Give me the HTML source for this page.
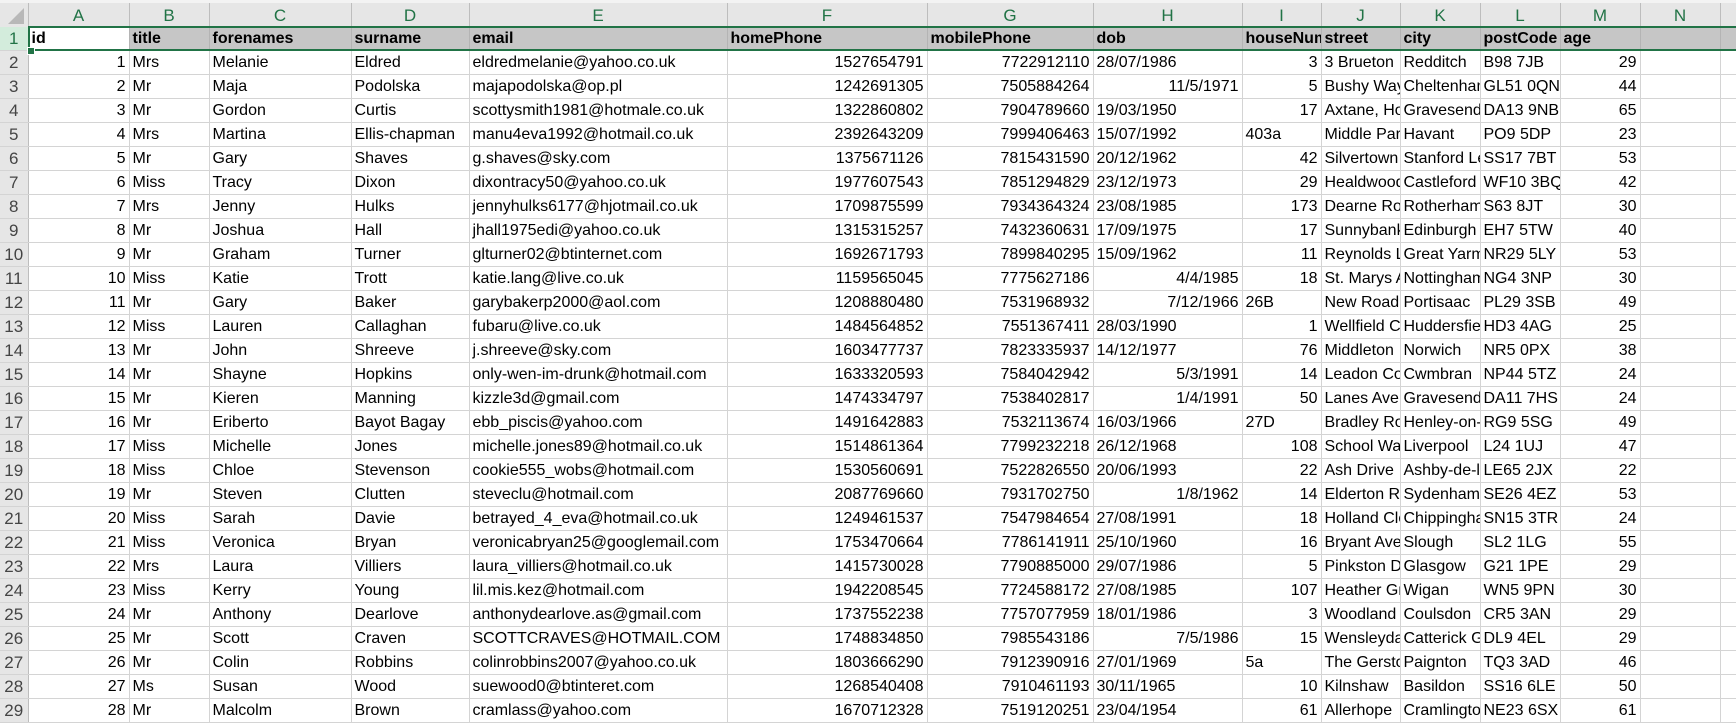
<!DOCTYPE html>
<html><head><meta charset="utf-8"><style>
html,body{margin:0;padding:0;background:#fff;width:1736px;height:721px;overflow:hidden}
body{font-family:"Liberation Sans",sans-serif;font-size:16px;color:#000}
.top{position:absolute;left:0;top:0;width:1736px;height:3px;background:#f3f3f3}
table{position:absolute;left:0;top:3px;border-collapse:collapse;table-layout:fixed;width:1736px}
td{border-right:1px solid #d4d4d4;border-bottom:1px solid #d4d4d4;height:23px;padding:0 3px;white-space:nowrap;overflow:hidden;line-height:23px;box-sizing:border-box}
tr.ch td{background:#e6e6e6;color:#217346;text-align:center;height:24px;font-size:17px;border-right:1px solid #bdbdbd;border-bottom:none}
td.rn{background:#e6e6e6;color:#444;text-align:center;padding:0;border-right:1px solid #bdbdbd;font-size:17px}
tr.h td{background:#c6c6c6;font-weight:bold;border-right:1px solid #b4b4b4}
tr.h td.rn{background:#d3ecdc;color:#217346;font-weight:normal}
tr.h td.a1{background:#fff}
.r{text-align:right}
.sel{position:absolute;left:28px;top:26px;width:1708px;height:25px;border-top:2px solid #217346;border-bottom:2px solid #217346;border-left:2px solid #217346;box-sizing:border-box;pointer-events:none}
.hdl{position:absolute;left:27px;top:47px;width:6px;height:6px;background:#217346;border:1px solid #fff}
.tri{position:absolute;left:8px;top:8px;width:0;height:0;border-left:16px solid transparent;border-bottom:16px solid #b8b8b8}
</style></head><body>
<div class="top"></div>
<table>
<colgroup><col style="width:28px"><col style="width:101px"><col style="width:80px"><col style="width:142px"><col style="width:118px"><col style="width:258px"><col style="width:200px"><col style="width:166px"><col style="width:149px"><col style="width:79px"><col style="width:79px"><col style="width:80px"><col style="width:80px"><col style="width:80px"><col style="width:80px"><col style="width:16px"></colgroup>
<tr class="ch"><td></td><td>A</td><td>B</td><td>C</td><td>D</td><td>E</td><td>F</td><td>G</td><td>H</td><td>I</td><td>J</td><td>K</td><td>L</td><td>M</td><td>N</td><td></td></tr>
<tr class="h"><td class="rn">1</td><td class="a1">id</td><td>title</td><td>forenames</td><td>surname</td><td>email</td><td>homePhone</td><td>mobilePhone</td><td>dob</td><td>houseNumber</td><td>street</td><td>city</td><td>postCode</td><td>age</td><td></td><td></td></tr>
<tr><td class="rn">2</td><td class="r">1</td><td>Mrs</td><td>Melanie</td><td>Eldred</td><td>eldredmelanie@yahoo.co.uk</td><td class="r">1527654791</td><td class="r">7722912110</td><td>28/07/1986</td><td class="r">3</td><td>3 Brueton</td><td>Redditch</td><td>B98 7JB</td><td class="r">29</td><td></td><td></td></tr>
<tr><td class="rn">3</td><td class="r">2</td><td>Mr</td><td>Maja</td><td>Podolska</td><td>majapodolska@op.pl</td><td class="r">1242691305</td><td class="r">7505884264</td><td class="r">11/5/1971</td><td class="r">5</td><td>Bushy Way</td><td>Cheltenham</td><td>GL51 0QN</td><td class="r">44</td><td></td><td></td></tr>
<tr><td class="rn">4</td><td class="r">3</td><td>Mr</td><td>Gordon</td><td>Curtis</td><td>scottysmith1981@hotmale.co.uk</td><td class="r">1322860802</td><td class="r">7904789660</td><td>19/03/1950</td><td class="r">17</td><td>Axtane, Horton</td><td>Gravesend</td><td>DA13 9NB</td><td class="r">65</td><td></td><td></td></tr>
<tr><td class="rn">5</td><td class="r">4</td><td>Mrs</td><td>Martina</td><td>Ellis-chapman</td><td>manu4eva1992@hotmail.co.uk</td><td class="r">2392643209</td><td class="r">7999406463</td><td>15/07/1992</td><td>403a</td><td>Middle Park</td><td>Havant</td><td>PO9 5DP</td><td class="r">23</td><td></td><td></td></tr>
<tr><td class="rn">6</td><td class="r">5</td><td>Mr</td><td>Gary</td><td>Shaves</td><td>g.shaves@sky.com</td><td class="r">1375671126</td><td class="r">7815431590</td><td>20/12/1962</td><td class="r">42</td><td>Silvertown</td><td>Stanford Le</td><td>SS17 7BT</td><td class="r">53</td><td></td><td></td></tr>
<tr><td class="rn">7</td><td class="r">6</td><td>Miss</td><td>Tracy</td><td>Dixon</td><td>dixontracy50@yahoo.co.uk</td><td class="r">1977607543</td><td class="r">7851294829</td><td>23/12/1973</td><td class="r">29</td><td>Healdwood</td><td>Castleford</td><td>WF10 3BQ</td><td class="r">42</td><td></td><td></td></tr>
<tr><td class="rn">8</td><td class="r">7</td><td>Mrs</td><td>Jenny</td><td>Hulks</td><td>jennyhulks6177@hjotmail.co.uk</td><td class="r">1709875599</td><td class="r">7934364324</td><td>23/08/1985</td><td class="r">173</td><td>Dearne Road</td><td>Rotherham</td><td>S63 8JT</td><td class="r">30</td><td></td><td></td></tr>
<tr><td class="rn">9</td><td class="r">8</td><td>Mr</td><td>Joshua</td><td>Hall</td><td>jhall1975edi@yahoo.co.uk</td><td class="r">1315315257</td><td class="r">7432360631</td><td>17/09/1975</td><td class="r">17</td><td>Sunnybank</td><td>Edinburgh</td><td>EH7 5TW</td><td class="r">40</td><td></td><td></td></tr>
<tr><td class="rn">10</td><td class="r">9</td><td>Mr</td><td>Graham</td><td>Turner</td><td>glturner02@btinternet.com</td><td class="r">1692671793</td><td class="r">7899840295</td><td>15/09/1962</td><td class="r">11</td><td>Reynolds Lane</td><td>Great Yarmouth</td><td>NR29 5LY</td><td class="r">53</td><td></td><td></td></tr>
<tr><td class="rn">11</td><td class="r">10</td><td>Miss</td><td>Katie</td><td>Trott</td><td>katie.lang@live.co.uk</td><td class="r">1159565045</td><td class="r">7775627186</td><td class="r">4/4/1985</td><td class="r">18</td><td>St. Marys Ave</td><td>Nottingham</td><td>NG4 3NP</td><td class="r">30</td><td></td><td></td></tr>
<tr><td class="rn">12</td><td class="r">11</td><td>Mr</td><td>Gary</td><td>Baker</td><td>garybakerp2000@aol.com</td><td class="r">1208880480</td><td class="r">7531968932</td><td class="r">7/12/1966</td><td>26B</td><td>New Road</td><td>Portisaac</td><td>PL29 3SB</td><td class="r">49</td><td></td><td></td></tr>
<tr><td class="rn">13</td><td class="r">12</td><td>Miss</td><td>Lauren</td><td>Callaghan</td><td>fubaru@live.co.uk</td><td class="r">1484564852</td><td class="r">7551367411</td><td>28/03/1990</td><td class="r">1</td><td>Wellfield Close</td><td>Huddersfield</td><td>HD3 4AG</td><td class="r">25</td><td></td><td></td></tr>
<tr><td class="rn">14</td><td class="r">13</td><td>Mr</td><td>John</td><td>Shreeve</td><td>j.shreeve@sky.com</td><td class="r">1603477737</td><td class="r">7823335937</td><td>14/12/1977</td><td class="r">76</td><td>Middleton</td><td>Norwich</td><td>NR5 0PX</td><td class="r">38</td><td></td><td></td></tr>
<tr><td class="rn">15</td><td class="r">14</td><td>Mr</td><td>Shayne</td><td>Hopkins</td><td>only-wen-im-drunk@hotmail.com</td><td class="r">1633320593</td><td class="r">7584042942</td><td class="r">5/3/1991</td><td class="r">14</td><td>Leadon Court</td><td>Cwmbran</td><td>NP44 5TZ</td><td class="r">24</td><td></td><td></td></tr>
<tr><td class="rn">16</td><td class="r">15</td><td>Mr</td><td>Kieren</td><td>Manning</td><td>kizzle3d@gmail.com</td><td class="r">1474334797</td><td class="r">7538402817</td><td class="r">1/4/1991</td><td class="r">50</td><td>Lanes Avenue</td><td>Gravesend</td><td>DA11 7HS</td><td class="r">24</td><td></td><td></td></tr>
<tr><td class="rn">17</td><td class="r">16</td><td>Mr</td><td>Eriberto</td><td>Bayot Bagay</td><td>ebb_piscis@yahoo.com</td><td class="r">1491642883</td><td class="r">7532113674</td><td>16/03/1966</td><td>27D</td><td>Bradley Road</td><td>Henley-on-Thames</td><td>RG9 5SG</td><td class="r">49</td><td></td><td></td></tr>
<tr><td class="rn">18</td><td class="r">17</td><td>Miss</td><td>Michelle</td><td>Jones</td><td>michelle.jones89@hotmail.co.uk</td><td class="r">1514861364</td><td class="r">7799232218</td><td>26/12/1968</td><td class="r">108</td><td>School Walk</td><td>Liverpool</td><td>L24 1UJ</td><td class="r">47</td><td></td><td></td></tr>
<tr><td class="rn">19</td><td class="r">18</td><td>Miss</td><td>Chloe</td><td>Stevenson</td><td>cookie555_wobs@hotmail.com</td><td class="r">1530560691</td><td class="r">7522826550</td><td>20/06/1993</td><td class="r">22</td><td>Ash Drive</td><td>Ashby-de-la-Zouch</td><td>LE65 2JX</td><td class="r">22</td><td></td><td></td></tr>
<tr><td class="rn">20</td><td class="r">19</td><td>Mr</td><td>Steven</td><td>Clutten</td><td>steveclu@hotmail.com</td><td class="r">2087769660</td><td class="r">7931702750</td><td class="r">1/8/1962</td><td class="r">14</td><td>Elderton Road</td><td>Sydenham</td><td>SE26 4EZ</td><td class="r">53</td><td></td><td></td></tr>
<tr><td class="rn">21</td><td class="r">20</td><td>Miss</td><td>Sarah</td><td>Davie</td><td>betrayed_4_eva@hotmail.co.uk</td><td class="r">1249461537</td><td class="r">7547984654</td><td>27/08/1991</td><td class="r">18</td><td>Holland Close</td><td>Chippingham</td><td>SN15 3TR</td><td class="r">24</td><td></td><td></td></tr>
<tr><td class="rn">22</td><td class="r">21</td><td>Miss</td><td>Veronica</td><td>Bryan</td><td>veronicabryan25@googlemail.com</td><td class="r">1753470664</td><td class="r">7786141911</td><td>25/10/1960</td><td class="r">16</td><td>Bryant Avenue</td><td>Slough</td><td>SL2 1LG</td><td class="r">55</td><td></td><td></td></tr>
<tr><td class="rn">23</td><td class="r">22</td><td>Mrs</td><td>Laura</td><td>Villiers</td><td>laura_villiers@hotmail.co.uk</td><td class="r">1415730028</td><td class="r">7790885000</td><td>29/07/1986</td><td class="r">5</td><td>Pinkston Drive</td><td>Glasgow</td><td>G21 1PE</td><td class="r">29</td><td></td><td></td></tr>
<tr><td class="rn">24</td><td class="r">23</td><td>Miss</td><td>Kerry</td><td>Young</td><td>lil.mis.kez@hotmail.com</td><td class="r">1942208545</td><td class="r">7724588172</td><td>27/08/1985</td><td class="r">107</td><td>Heather Grove</td><td>Wigan</td><td>WN5 9PN</td><td class="r">30</td><td></td><td></td></tr>
<tr><td class="rn">25</td><td class="r">24</td><td>Mr</td><td>Anthony</td><td>Dearlove</td><td>anthonydearlove.as@gmail.com</td><td class="r">1737552238</td><td class="r">7757077959</td><td>18/01/1986</td><td class="r">3</td><td>Woodland</td><td>Coulsdon</td><td>CR5 3AN</td><td class="r">29</td><td></td><td></td></tr>
<tr><td class="rn">26</td><td class="r">25</td><td>Mr</td><td>Scott</td><td>Craven</td><td>SCOTTCRAVES@HOTMAIL.COM</td><td class="r">1748834850</td><td class="r">7985543186</td><td class="r">7/5/1986</td><td class="r">15</td><td>Wensleydale</td><td>Catterick Garrison</td><td>DL9 4EL</td><td class="r">29</td><td></td><td></td></tr>
<tr><td class="rn">27</td><td class="r">26</td><td>Mr</td><td>Colin</td><td>Robbins</td><td>colinrobbins2007@yahoo.co.uk</td><td class="r">1803666290</td><td class="r">7912390916</td><td>27/01/1969</td><td>5a</td><td>The Gerston</td><td>Paignton</td><td>TQ3 3AD</td><td class="r">46</td><td></td><td></td></tr>
<tr><td class="rn">28</td><td class="r">27</td><td>Ms</td><td>Susan</td><td>Wood</td><td>suewood0@btinteret.com</td><td class="r">1268540408</td><td class="r">7910461193</td><td>30/11/1965</td><td class="r">10</td><td>Kilnshaw</td><td>Basildon</td><td>SS16 6LE</td><td class="r">50</td><td></td><td></td></tr>
<tr><td class="rn">29</td><td class="r">28</td><td>Mr</td><td>Malcolm</td><td>Brown</td><td>cramlass@yahoo.com</td><td class="r">1670712328</td><td class="r">7519120251</td><td>23/04/1954</td><td class="r">61</td><td>Allerhope</td><td>Cramlington</td><td>NE23 6SX</td><td class="r">61</td><td></td><td></td></tr>
</table>
<div class="tri"></div>
<div class="sel"></div>
<div class="hdl"></div>
</body></html>
